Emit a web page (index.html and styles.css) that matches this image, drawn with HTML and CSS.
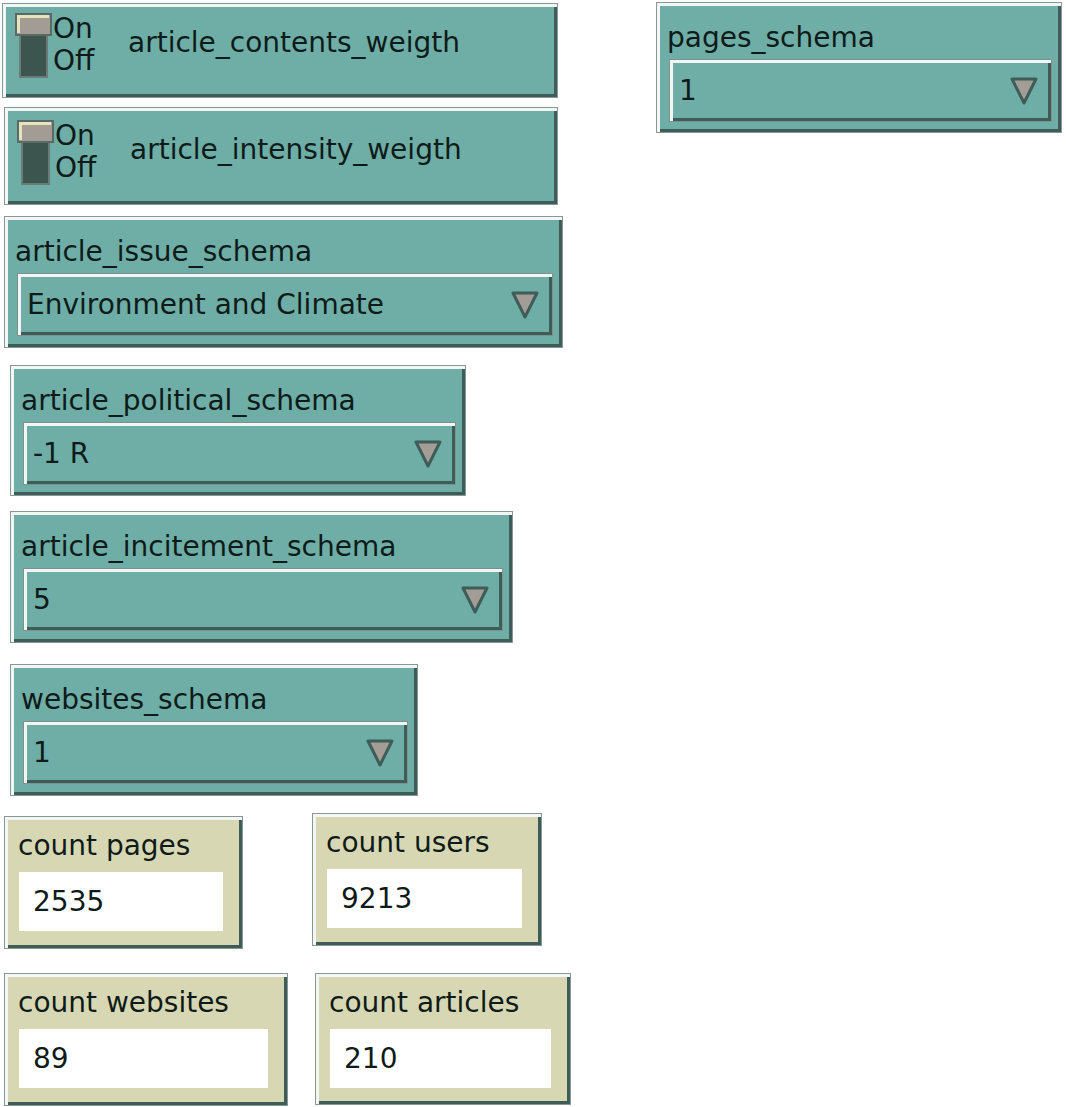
FILE: index.html
```html
<!DOCTYPE html>
<html lang="en" dir="ltr">
    <head>
        <meta charset="utf-8">
        <title>Interface</title>
        <link rel="stylesheet" href="styles.css">
    </head>
    <body>
        <div class="canvas">
            <div class="widget switch sw-contents">
                <svg class="toggle" width="37" height="66" viewBox="0 0 37 66">
                    <rect x="5" y="21" width="27" height="43" fill="#3c554f" stroke="#6a7c78" stroke-width="2"/>
                    <rect x="1" y="1" width="35" height="21" fill="#a29c95" stroke="#5a6a66" stroke-width="2"/>
                    <path d="M3.5 20 V3.5 H34" fill="none" stroke="#e6e4bc" stroke-width="3"/>
                </svg>
                <div class="onoff"><div>On</div><div>Off</div></div>
                <div class="sw-label">article_contents_weigth</div>
            </div>

            <div class="widget switch sw-intensity">
                <svg class="toggle" width="37" height="66" viewBox="0 0 37 66">
                    <rect x="5" y="21" width="27" height="43" fill="#3c554f" stroke="#6a7c78" stroke-width="2"/>
                    <rect x="1" y="1" width="35" height="21" fill="#a29c95" stroke="#5a6a66" stroke-width="2"/>
                    <path d="M3.5 20 V3.5 H34" fill="none" stroke="#e6e4bc" stroke-width="3"/>
                </svg>
                <div class="onoff"><div>On</div><div>Off</div></div>
                <div class="sw-label">article_intensity_weigth</div>
            </div>

            <div class="widget chooser ch-issue">
                <div class="label">article_issue_schema</div>
                <div class="choice">
                    <span>Environment and Climate</span>
                    <svg class="arrow" width="28" height="28" viewBox="0 0 28 28"><polygon points="2,2 26,2 14,26" fill="#a39d96" stroke="#3e5d58" stroke-width="3" stroke-linejoin="round"/></svg>
                </div>
            </div>

            <div class="widget chooser ch-political">
                <div class="label">article_political_schema</div>
                <div class="choice">
                    <span>-1 R</span>
                    <svg class="arrow" width="28" height="28" viewBox="0 0 28 28"><polygon points="2,2 26,2 14,26" fill="#a39d96" stroke="#3e5d58" stroke-width="3" stroke-linejoin="round"/></svg>
                </div>
            </div>

            <div class="widget chooser ch-incitement">
                <div class="label">article_incitement_schema</div>
                <div class="choice">
                    <span>5</span>
                    <svg class="arrow" width="28" height="28" viewBox="0 0 28 28"><polygon points="2,2 26,2 14,26" fill="#a39d96" stroke="#3e5d58" stroke-width="3" stroke-linejoin="round"/></svg>
                </div>
            </div>

            <div class="widget chooser ch-websites">
                <div class="label">websites_schema</div>
                <div class="choice">
                    <span>1</span>
                    <svg class="arrow" width="28" height="28" viewBox="0 0 28 28"><polygon points="2,2 26,2 14,26" fill="#a39d96" stroke="#3e5d58" stroke-width="3" stroke-linejoin="round"/></svg>
                </div>
            </div>

            <div class="widget chooser ch-pages">
                <div class="label">pages_schema</div>
                <div class="choice">
                    <span>1</span>
                    <svg class="arrow" width="28" height="28" viewBox="0 0 28 28"><polygon points="2,2 26,2 14,26" fill="#a39d96" stroke="#3e5d58" stroke-width="3" stroke-linejoin="round"/></svg>
                </div>
            </div>

            <div class="widget monitor mo-pages">
                <div class="label">count pages</div>
                <div class="value">2535</div>
            </div>
            <div class="widget monitor mo-users">
                <div class="label">count users</div>
                <div class="value">9213</div>
            </div>
            <div class="widget monitor mo-websites">
                <div class="label">count websites</div>
                <div class="value">89</div>
            </div>
            <div class="widget monitor mo-articles">
                <div class="label">count articles</div>
                <div class="value">210</div>
            </div>
        </div>
    </body>
</html>
```

FILE: styles.css
```css
*{
    font-family: "DejaVu Sans", "Liberation Sans", sans-serif;
    box-sizing: border-box;
}
body{
    margin: 0;
    padding: 0;
    background: #ffffff;
    color: #0f1b19;
}
.canvas{
    position: relative;
    width: 1066px;
    height: 1107px;
}

/* widgets sit on the interface canvas at their own places */
.widget{
    position: absolute;
    border: 1px solid #8a9895;
    background-color: #6eaea7;
    box-shadow: inset 3px 3px 0 #f2f6f4, inset -3px -3px 0 #3e5d58;
    font-size: 28px;
    line-height: 32px;
}

/* switches */
.switch{
    display: flex;
    align-items: flex-start;
    padding-left: 12px;
}
.toggle{
    flex: none;
    display: block;
}
.onoff{
    margin-left: 1px;
    width: 44px;
}
.sw-label{
    margin-left: 31px;
    margin-top: 14px;
}
.sw-contents{
    left: 2px;
    top: 3px;
    width: 556px;
    height: 95px;
    padding-top: 9px;
}
.sw-intensity{
    left: 4px;
    top: 107px;
    width: 554px;
    height: 98px;
    padding-top: 12px;
}

/* choosers */
.chooser .label{
    margin-top: 19px;
    padding-left: 10px;
    height: 32px;
    white-space: nowrap;
}
.choice{
    margin: 5px 9px 0 12px;
    height: 63px;
    border: 1px solid #7f918d;
    box-shadow: inset 3px 3px 0 #f2f6f4, inset -3px -3px 0 #3e5d58;
    display: flex;
    align-items: center;
    justify-content: space-between;
    padding: 0 13px 0 9px;
}
.arrow{
    display: block;
    flex: none;
}
.ch-issue{
    left: 4px;
    top: 216px;
    width: 559px;
    height: 132px;
}
.ch-political{
    left: 10px;
    top: 365px;
    width: 456px;
    height: 131px;
}
.ch-incitement{
    left: 10px;
    top: 511px;
    width: 503px;
    height: 132px;
}
.ch-websites{
    left: 10px;
    top: 664px;
    width: 408px;
    height: 132px;
}
.ch-pages{
    left: 656px;
    top: 2px;
    width: 406px;
    height: 131px;
}

/* monitors */
.monitor{
    background-color: #d7d8b3;
}
.monitor .label{
    margin-top: 13px;
    padding-left: 13px;
    height: 32px;
    white-space: nowrap;
}
.value{
    margin: 10px 19px 0 14px;
    height: 59px;
    background: #ffffff;
    display: flex;
    align-items: center;
    padding-left: 14px;
}
.mo-pages{
    left: 4px;
    top: 816px;
    width: 239px;
    height: 133px;
}
.mo-users{
    left: 312px;
    top: 813px;
    width: 230px;
    height: 133px;
}
.mo-websites{
    left: 4px;
    top: 973px;
    width: 284px;
    height: 133px;
}
.mo-articles{
    left: 315px;
    top: 973px;
    width: 256px;
    height: 132px;
}
```
